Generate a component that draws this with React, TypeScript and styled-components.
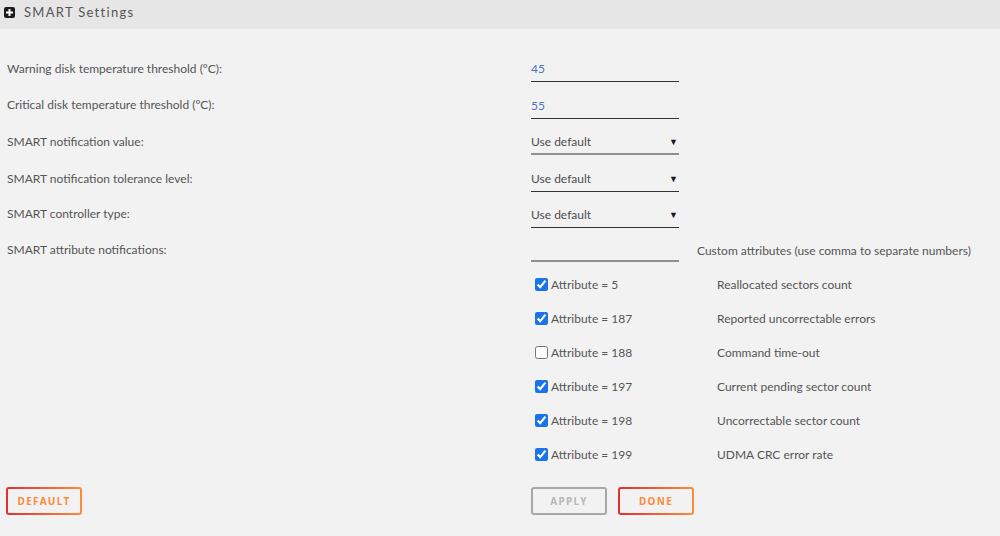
import React from "react";
import styled, { createGlobalStyle } from "styled-components";

const Global = createGlobalStyle`
  html, body { margin: 0; padding: 0; background: #f2f2f2; }
  body { font-family: Lato, "Noto Sans", sans-serif; color: #555; }
  * { box-sizing: border-box; }
`;

const Page = styled.div`
  width: 1000px;
  height: 536px;
  background: #f2f2f2;
  overflow: hidden;
`;

const Header = styled.div`
  height: 29px;
  background: #e6e6e6;
  display: flex;
  align-items: center;
  gap: 9px;
  padding-left: 4px;
`;

const HeaderIcon = styled.span`
  width: 11px;
  height: 11px;
  border-radius: 2px;
  background: #1c1c1c;
  display: inline-flex;
  align-items: center;
  justify-content: center;
  margin-top: -4px;
`;

const Title = styled.h2`
  margin: 0;
  font-size: 13px;
  font-weight: 400;
  letter-spacing: 1.3px;
  color: #555;
  margin-top: -5px;
`;

const Form = styled.div`
  padding: 21px 0 0 7px;
`;

const Row = styled.div<{ $h?: number }>`
  display: grid;
  grid-template-columns: 524px 148px 1fr;
  height: ${(p) => p.$h ?? 36}px;
  align-items: center;
`;

const Label = styled.div`
  font-size: 12px;
  color: #555;
`;

const TextField = styled.div<{ $blue?: boolean; $thick?: boolean }>`
  height: ${(p) => (p.$thick ? 24 : 26)}px;
  display: flex;
  align-items: center;
  justify-content: space-between;
  font-size: 12px;
  color: ${(p) => (p.$blue ? "#4a72c2" : "#4d4d4d")};
  border-bottom: ${(p) => (p.$thick ? "2px solid #8f8f8f" : "1px solid #333")};
  margin-top: 2px;
`;

const Arrow = styled.span`
  font-size: 9px;
  color: #1a1a1a;
  margin-right: 1px;
`;

const Hint = styled.div`
  font-size: 12px;
  color: #555;
  padding-left: 18px;
  margin-top: 2px;
`;

const CheckCell = styled.label`
  display: flex;
  align-items: center;
  gap: 3px;
  padding-left: 4px;
  font-size: 12px;
  color: #555;
`;

const Box = styled.input`
  width: 13px;
  height: 13px;
  margin: 0;
  accent-color: #1a73e8;
`;

const Desc = styled.div`
  font-size: 12px;
  color: #555;
  padding-left: 38px;
`;

const ButtonRow = styled.div`
  display: grid;
  grid-template-columns: 525px 1fr;
  margin-top: 16px;
  padding-left: 6px;
`;

const Buttons = styled.div`
  display: flex;
  gap: 11px;
`;

const Btn = styled.button<{ $disabled?: boolean }>`
  width: 76px;
  height: 28px;
  border-radius: 3px;
  border: 2px solid transparent;
  font-family: "Noto Sans", sans-serif;
  font-size: 10px;
  font-weight: 700;
  letter-spacing: 1.3px;
  padding: 0;
  cursor: pointer;
  color: ${(p) => (p.$disabled ? "#b8b8b8" : "#fb8a3c")};
  background: ${(p) =>
    p.$disabled
      ? "linear-gradient(#f2f2f2,#f2f2f2) padding-box, linear-gradient(#a8a8a8,#a8a8a8) border-box"
      : "linear-gradient(#f2f2f2,#f2f2f2) padding-box, linear-gradient(90deg,#e22e33,#fd8c3c) border-box"};
`;

const attrs = [
  { n: 5, c: true, d: "Reallocated sectors count" },
  { n: 187, c: true, d: "Reported uncorrectable errors" },
  { n: 188, c: false, d: "Command time-out" },
  { n: 197, c: true, d: "Current pending sector count" },
  { n: 198, c: true, d: "Uncorrectable sector count" },
  { n: 199, c: true, d: "UDMA CRC error rate" },
];

export default function App() {
  return (
    <Page>
      <Global />
      <Header>
        <HeaderIcon>
          <svg width="7" height="7" viewBox="0 0 7 7">
            <rect x="2.5" y="0" width="2" height="7" fill="#fff" />
            <rect x="0" y="2.5" width="7" height="2" fill="#fff" />
          </svg>
        </HeaderIcon>
        <Title>SMART Settings</Title>
      </Header>
      <Form>
        <Row>
          <Label>Warning disk temperature threshold (°C):</Label>
          <TextField $blue>45</TextField>
        </Row>
        <Row $h={37}>
          <Label>Critical disk temperature threshold (°C):</Label>
          <TextField $blue>55</TextField>
        </Row>
        <Row $h={37}>
          <Label>SMART notification value:</Label>
          <TextField $thick>
            Use default<Arrow>▼</Arrow>
          </TextField>
        </Row>
        <Row>
          <Label>SMART notification tolerance level:</Label>
          <TextField>
            Use default<Arrow>▼</Arrow>
          </TextField>
        </Row>
        <Row $h={35}>
          <Label>SMART controller type:</Label>
          <TextField>
            Use default<Arrow>▼</Arrow>
          </TextField>
        </Row>
        <Row $h={36}>
          <Label>SMART attribute notifications:</Label>
          <TextField $thick />
          <Hint>Custom attributes (use comma to separate numbers)</Hint>
        </Row>
        {attrs.map((a) => (
          <Row key={a.n} $h={34}>
            <span />
            <CheckCell>
              <Box type="checkbox" defaultChecked={a.c} />
              Attribute = {a.n}
            </CheckCell>
            <Desc>{a.d}</Desc>
          </Row>
        ))}
      </Form>
      <ButtonRow>
        <div>
          <Btn>DEFAULT</Btn>
        </div>
        <Buttons>
          <Btn $disabled>APPLY</Btn>
          <Btn>DONE</Btn>
        </Buttons>
      </ButtonRow>
    </Page>
  );
}
